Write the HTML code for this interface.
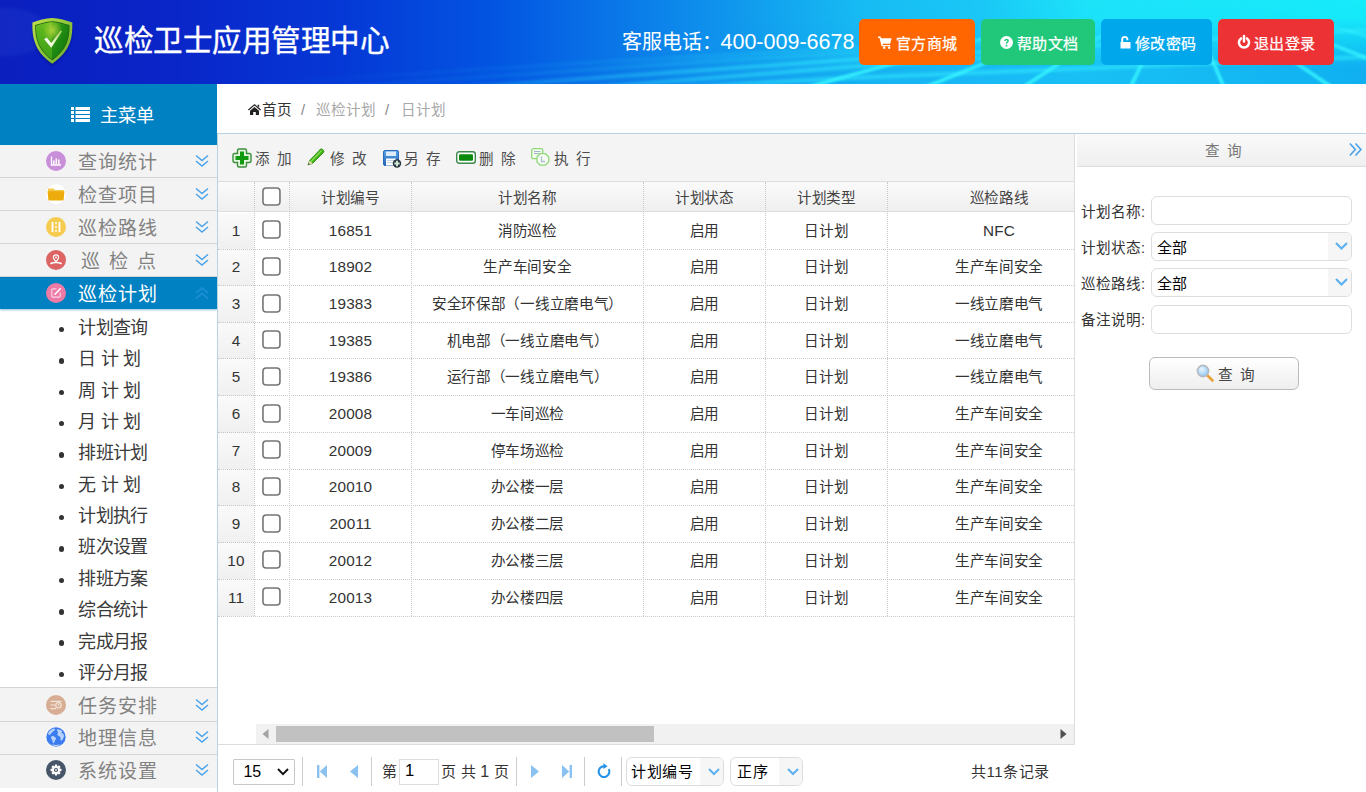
<!DOCTYPE html>
<html lang="zh-CN">
<head>
<meta charset="utf-8">
<title>巡检卫士应用管理中心</title>
<style>
*{box-sizing:border-box;margin:0;padding:0}
html,body{width:1366px;height:792px;overflow:hidden;background:#fff}
body{font-family:"Liberation Sans",sans-serif;color:#333;position:relative;font-size:14.6px;letter-spacing:-0.33px}
.abs{position:absolute}
svg{display:block;overflow:visible}
#hdr{position:absolute;left:0;top:0;width:1366px;height:84px;overflow:hidden;
 background:linear-gradient(90deg,#0b1fbe 0%,#0a25c8 12.4%,#0538d6 25%,#0356e2 36.6%,#0e8eec 51.2%,#16b2f2 63%,#19b9f5 71.7%,#18c0f5 79.8%,#10b0f0 100%)}
#title{position:absolute;left:94px;top:18px;height:46px;line-height:46px;font-size:29.6px;letter-spacing:-0.44px;color:#fff;white-space:nowrap;-webkit-text-stroke:0.35px #fff}
.tel{position:absolute;top:27px;height:30px;line-height:30px;color:#fff;white-space:nowrap;letter-spacing:0}
.hbtn{position:absolute;top:19px;height:46px;border-radius:5px;color:#fff;font-size:15px;letter-spacing:0.3px;line-height:46px;white-space:nowrap;-webkit-text-stroke:0.25px #fff}
.hbtn span{position:absolute;top:1.5px;height:46px;line-height:46px}
.hbtn svg{position:absolute}
/* sidebar */
#side{position:absolute;left:0;top:84px;width:217px;height:708px;background:#fff}
#sidehd{position:absolute;left:0;top:0;width:217px;height:61px;background:#0081c2;color:#fff}
#sidehd .mt{position:absolute;left:99.5px;top:16.5px;height:30px;line-height:30px;font-size:18.4px;letter-spacing:0.2px;white-space:nowrap}
.accbg{position:absolute;left:0;width:217px;background:#f3f3f3}
.accbg.sel{background:#0081c2;box-shadow:0 1px 2px rgba(0,110,170,.45)}
.accln{position:absolute;left:0;width:217px;height:1px;background:#d4d4d4}
#side .t{position:absolute;left:78.3px;height:32px;line-height:32px;font-size:19px;letter-spacing:0.9px;white-space:nowrap}
#side .ic{position:absolute;left:46px;width:20px;height:20px}
#side .chev{position:absolute;left:194.5px;width:14px;height:14px}
.sub{position:absolute;left:78.3px;height:30px;line-height:30px;font-size:18px;letter-spacing:-0.7px;word-spacing:1px;color:#3a3a3a;white-space:nowrap}
.dot{position:absolute;left:58.5px;width:5.5px;height:5.5px;border-radius:50%;background:#333}
/* main */
#crumb{position:absolute;left:218px;top:84px;width:1148px;height:49px;background:#fff;font-size:14.6px;color:#999}
#crumb span{position:absolute;top:10.6px;height:30px;line-height:30px;white-space:nowrap}
#vline{position:absolute;left:217px;top:133px;width:1px;height:659px;background:#b9d2e2}
#topline{position:absolute;left:218px;top:133px;width:1148px;height:1px;background:#b9d3e2}
#tb{position:absolute;left:218px;top:134px;width:856px;height:47px;background:#f4f4f4}
#tb .b{position:absolute;top:9.8px;margin-left:-0.7px;height:30px;line-height:30px;font-size:14.6px;word-spacing:3px;color:#4c4c4c;white-space:nowrap}
#tb svg{position:absolute}
#grid{position:absolute;left:218px;top:181px;width:856px;height:563px;background:#fff;overflow:hidden}
#ghead{position:absolute;left:0;top:0;width:856px;height:31px;border-top:1px solid #ddd;border-bottom:1px solid #ddd;background:linear-gradient(180deg,#fafafa 0%,#efefef 100%)}
.hc{position:absolute;top:2.9px;height:28px;line-height:28px;text-align:center;font-size:14.6px;color:#444;white-space:nowrap}
.vsep{position:absolute;width:0;border-left:1px dotted #c8c8c8}
.hsep{position:absolute;left:0;width:856px;height:0;border-top:1px dotted #c8c8c8;z-index:2}
.rn{position:absolute;left:0;width:36px;background:linear-gradient(180deg,#fafafa 0%,#f0f0f0 100%);text-align:center;font-size:14.6px;color:#333}
.c{position:absolute;text-align:center;font-size:14.6px;color:#333;white-space:nowrap}
.n{font-size:15.3px !important;letter-spacing:0.15px !important}
.cb{position:absolute;width:19px;height:19px}
#vr{position:absolute;left:1074px;top:134px;width:1px;height:611px;background:#ddd}
/* scrollbar */
#sb{position:absolute;left:256px;top:724px;width:818px;height:20px;background:#f1f1f1}
#sbthumb{position:absolute;left:20px;top:1.5px;width:378px;height:16px;background:#c1c1c1}
#pg{position:absolute;left:218px;top:744px;width:856px;height:48px;border-top:1px solid #ddd;background:#fff;font-size:15px;letter-spacing:0.2px;color:#333}
#pg .s{position:absolute;top:12px;width:1px;height:29px;background:#ccc}
#pg .tx{position:absolute;top:12px;height:30px;line-height:30px;white-space:nowrap}
.combo{position:absolute;border:1px solid #ddd;border-radius:6px;background:#fff;overflow:hidden;font-size:14.6px;color:#000}
.combo .ar{position:absolute;right:0;top:0;bottom:0;width:23px;background:#f6f6f6}
.combo .v{position:absolute;left:4.3px;top:0;white-space:nowrap}
.combo svg{position:absolute}
/* right panel */
#rp{position:absolute;left:1077px;top:134px;width:289px;height:658px;background:#fff}
#rphd{position:absolute;left:0;top:0;width:289px;height:33px;border-bottom:1px solid #ddd;background:linear-gradient(180deg,#fafafa 0%,#efefef 100%)}
#rphd .t{position:absolute;left:0;width:289px;top:2.2px;height:30px;line-height:30px;text-align:center;font-size:14.6px;word-spacing:3px;color:#777;white-space:nowrap}
.lbl{position:absolute;left:3.8px;height:30px;line-height:30px;font-size:14.6px;letter-spacing:0.05px;color:#333;white-space:nowrap}
.inp{position:absolute;left:74px;width:201px;height:29px;border:1px solid #ddd;border-radius:6px;background:#fff}
#qbtn{position:absolute;left:72px;top:223px;width:150px;height:33px;border:1px solid #bbb;border-radius:6px;background:linear-gradient(180deg,#fff 0%,#eee 100%);font-size:14.6px;color:#444}
</style>
</head>
<body>
<div id="hdr">
  <svg class="abs" style="left:0;top:0" width="1366" height="84" viewBox="0 0 1366 84">
    <defs>
      <linearGradient id="topc" x1="0" y1="0" x2="1" y2="0">
        <stop offset="0.52" stop-color="#1eebfa" stop-opacity="0"/>
        <stop offset="0.72" stop-color="#1eebfa" stop-opacity=".30"/>
        <stop offset="0.80" stop-color="#1eebfa" stop-opacity=".82"/>
        <stop offset="1" stop-color="#16ecfa" stop-opacity="1"/>
      </linearGradient>
      <linearGradient id="tv" x1="0" y1="0" x2="0" y2="1">
        <stop offset="0" stop-color="#fff" stop-opacity="1"/>
        <stop offset="0.22" stop-color="#fff" stop-opacity=".95"/>
        <stop offset="0.80" stop-color="#fff" stop-opacity="0"/>
      </linearGradient>
      <mask id="mt"><rect x="0" y="0" width="1366" height="84" fill="url(#tv)"/></mask>
      <linearGradient id="mk" x1="0" y1="0" x2="0" y2="1">
        <stop offset="0.18" stop-color="#fff" stop-opacity="0"/>
        <stop offset="0.55" stop-color="#fff" stop-opacity=".8"/>
        <stop offset="1" stop-color="#fff" stop-opacity="1"/>
      </linearGradient>
      <mask id="m1"><rect x="0" y="0" width="1366" height="84" fill="url(#mk)"/></mask>
      <linearGradient id="mh" x1="0" y1="0" x2="1" y2="0"><stop offset="0.15" stop-color="#fff" stop-opacity="0"/><stop offset="0.36" stop-color="#fff" stop-opacity=".35"/><stop offset="0.60" stop-color="#fff" stop-opacity="1"/></linearGradient>
      <mask id="m2"><rect x="0" y="0" width="1366" height="84" fill="url(#mh)"/></mask>
      <filter id="bl" x="-5%" y="-50%" width="110%" height="200%"><feGaussianBlur stdDeviation="0.9"/></filter>
      <filter id="bl2" x="-5%" y="-50%" width="110%" height="200%"><feGaussianBlur stdDeviation="1.6"/></filter>
    </defs>
    <rect x="0" y="0" width="1366" height="84" fill="url(#topc)" mask="url(#mt)"/>
    <ellipse cx="8" cy="32" rx="40" ry="24" fill="#5a7cf0" opacity=".10" filter="url(#bl2)"/>
    <g mask="url(#m2)"><g filter="url(#bl2)" stroke="#34eeff" stroke-width="4.200" fill="none" opacity=".55">
      <polyline points="150,106 511,84 860,59 1366,30"/>
      <polyline points="420,98 636,84 860,66 1000,57"/>
      <polyline points="600,93 737,84 848,78 1366,57"/>
      <polyline points="0,100 380,84 700,62 1100,38" opacity=".45"/>
      <polyline points="-100,100 250,84 600,62 1000,40" opacity=".35"/>
    </g></g>
    <g mask="url(#m1)"><g filter="url(#bl)" stroke="#38f6ff" stroke-width="3.6" opacity=".9">
      <line x1="1180" y1="-16" x2="782.9" y2="94" /><line x1="1180" y1="-16" x2="908.3" y2="94" /><line x1="1180" y1="-16" x2="1012.8" y2="94" /><line x1="1180" y1="-16" x2="1127.2" y2="94" /><line x1="1180" y1="-16" x2="1226.8" y2="94" /><line x1="1180" y1="-16" x2="1341.7" y2="94" /><line x1="1180" y1="-16" x2="1457.2" y2="94" /><line x1="1180" y1="-16" x2="1576.0" y2="94" />
    </g></g>
  </svg>
  <svg class="abs" style="left:32.1px;top:18.1px" width="41" height="46" viewBox="0 0 41 46">
    <defs>
      <linearGradient id="shb" x1="0" y1="0" x2="1" y2="1">
        <stop offset="0" stop-color="#c2e04a"/><stop offset=".5" stop-color="#8fc63a"/><stop offset="1" stop-color="#6aa82a"/>
      </linearGradient>
      <linearGradient id="shl" x1="0" y1="0" x2="0" y2="1">
        <stop offset="0" stop-color="#6cbc22"/><stop offset=".25" stop-color="#57b31c"/><stop offset="1" stop-color="#3fa016"/>
      </linearGradient>
      <linearGradient id="shr" x1="0" y1="0" x2="1" y2="1">
        <stop offset="0" stop-color="#4aa818"/><stop offset=".45" stop-color="#1f8a12"/><stop offset="1" stop-color="#0f6e0b"/>
      </linearGradient>
      <radialGradient id="shh" cx=".5" cy=".22" r=".3">
        <stop offset="0" stop-color="#b4d63c" stop-opacity=".9"/><stop offset="1" stop-color="#b4d63c" stop-opacity="0"/>
      </radialGradient>
      <linearGradient id="chk" x1="0" y1="0" x2="1" y2="0">
        <stop offset="0" stop-color="#ffffff"/><stop offset=".45" stop-color="#f2fadf"/><stop offset="1" stop-color="#a6cc55"/>
      </linearGradient>
      <filter id="shs" x="-20%" y="-20%" width="140%" height="140%"><feGaussianBlur stdDeviation="1.2"/></filter>
    </defs>
    <path d="M20.2 2 C13.500 2.200 6 4.600 0.400 6.400 C0.200 14 0.800 21 2.800 26.300 C5.500 34.500 11 41.500 20.200 47.700 C29.400 41.500 35 34.500 38 26.300 C40 21 40.500 14 40.300 6.400 C34.500 4.600 27 2.200 20.200 2Z" fill="#06106a" opacity=".45" filter="url(#shs)"/>
    <path d="M20.2 0 C13.500 0.200 6 2.600 0.400 4.400 C0.200 12 0.800 19 2.800 24.300 C5.500 32.500 11 39.500 20.200 45.700 C29.400 39.500 35 32.500 38 24.300 C40 19 40.500 12 40.300 4.400 C34.500 2.600 27 0.200 20.200 0Z" fill="url(#shb)"/>
    <path d="M20.2 3.200 C14 3.400 8 5.600 3.200 7.100 C3.100 13 3.700 19 5.400 23.600 C7.800 30.800 12.600 37 20.200 42.300 C27.800 37 32.800 30.800 35.400 23.600 C37.100 19 37.600 13 37.500 7.100 C32.500 5.600 26.500 3.400 20.200 3.200Z" fill="#1c6410"/>
    <path d="M20.2 4 C14.200 4.200 8.500 6.300 4 7.800 C3.900 13.300 4.500 19 6.100 23.400 C8.400 30.300 13 36.200 20.200 41.300Z" fill="url(#shl)"/>
    <path d="M20.2 4 C26.200 4.200 32 6.300 36.700 7.800 C36.800 13.300 36.300 19 34.700 23.400 C32.200 30.300 27.400 36.200 20.200 41.300Z" fill="url(#shr)"/>
    <path d="M20.2 4 C14.200 4.200 8.500 6.300 4 7.800 C3.900 13.300 4.500 19 6.100 23.400 C8.400 30.300 13 36.200 20.200 41.300 C27.400 36.200 32.200 30.300 34.700 23.400 C36.300 19 36.800 13.300 36.700 7.800 C32 6.300 26.200 4.200 20.200 4Z" fill="url(#shh)"/>
    <path d="M12.200 21.300 L14.700 19.500 L19.300 25 L28.700 12.400 L30.100 13.300 L19.300 29.800 Z" fill="url(#chk)"/>
  </svg>
  <div id="title">巡检卫士应用管理中心</div>
  <div class="tel" style="left:622px;font-size:20px">客服电话：</div>
  <div class="tel" style="left:720.5px;font-size:21.5px;top:26.5px">400-009-6678</div>
  <div class="hbtn" style="left:859px;width:116px;background:#ff6600">
    <svg style="left:19px;top:17px" width="14" height="13" viewBox="0 0 14 13"><path d="M0 0.600h2.600l0.500 1.600h10.600l-1.600 5.600h-7.600l0.300 1.200h7.400v1.300h-8.600l-2.100-8.400h-1.500z M5 11.700a1.200 1.200 0 1 0 2.400 0a1.200 1.200 0 1 0-2.400 0z M10 11.700a1.200 1.200 0 1 0 2.400 0a1.200 1.200 0 1 0-2.400 0z" fill="#fff"/></svg>
    <span style="left:37px">官方商城</span></div>
  <div class="hbtn" style="left:981px;width:114px;background:#22c87a">
    <svg style="left:19px;top:17px" width="13" height="13" viewBox="0 0 13 13"><circle cx="6.500" cy="6.500" r="6.500" fill="#fff"/><path d="M4.300 5.100c0-1.500 1-2.300 2.300-2.300s2.300 0.800 2.300 2c0 1.700-1.700 1.600-1.700 3.000h-1.500c0-1.900 1.600-2 1.600-2.900c0-0.400-0.300-0.700-0.800-0.700s-0.800 0.300-0.800 0.900z M5.700 8.800h1.600v1.600h-1.600z" fill="#22c87a"/></svg>
    <span style="left:36px">帮助文档</span></div>
  <div class="hbtn" style="left:1101px;width:111px;background:#00a7eb">
    <svg style="left:19.3px;top:16.800px" width="11" height="13" viewBox="0 0 11 13"><path d="M0.500 6h10v6.500h-10z" fill="#fff"/><path d="M2.200 6v-2.500a2.600 2.600 0 0 1 5.200 0v0.700" fill="none" stroke="#fff" stroke-width="1.900"/></svg>
    <span style="left:34px">修改密码</span></div>
  <div class="hbtn" style="left:1218px;width:116px;background:#ed3236">
    <svg style="left:19.3px;top:16.4px" width="14" height="14" viewBox="0 0 14 14"><path d="M4 3.400a5.100 5.100 0 1 0 6 0" fill="none" stroke="#fff" stroke-width="2.500" stroke-linecap="round"/><path d="M7 1v5.600" stroke="#fff" stroke-width="2.500" stroke-linecap="round"/></svg>
    <span style="left:36px">退出登录</span></div>
</div>
<div id="side">
<div id="sidehd"><svg class="abs" style="left:71px;top:23px" width="19" height="15" viewBox="0 0 19 15"><path d="M0 0h3v3h-3zM0 4h3v3h-3zM0 8h3v3h-3zM0 12h3v3h-3zM4.500 0h14.500v3h-14.500zM4.500 4h14.500v3h-14.500zM4.500 8h14.500v3h-14.500zM4.500 12h14.500v3h-14.500z" fill="#fff"/></svg><div class="mt">主菜单</div></div>
<div class="accbg" style="top:61px;height:132px"></div>
<div class="accbg sel" style="top:193px;height:31.8px"></div>
<div class="accbg" style="top:603px;height:101px"></div>
<div class="accln" style="top:93px"></div>
<div class="accln" style="top:126px"></div>
<div class="accln" style="top:159px"></div>
<div class="accln" style="top:192px"></div>
<div class="accln" style="top:603px"></div>
<div class="accln" style="top:637px"></div>
<div class="accln" style="top:670px"></div>
<svg class="ic" style="top:66.60px" viewBox="0 0 20 20"><circle cx="10" cy="10" r="10" fill="#c98fd8"/><path d="M5.500 5.500v8.500h9.500" fill="none" stroke="#fff" stroke-width="1.300"/><path d="M7.800 13v-3.500M10.300 13v-5.500M12.800 13v-4.500" stroke="#fff" stroke-width="1.500"/></svg><div class="t" style="top:62.70px;color:#828282;">查询统计</div><svg class="chev" style="top:69.60px" viewBox="0 0 14 14"><path d="M1 1.500l6 5l6-5M1 7l6 5l6-5" fill="none" stroke="#4aa3ea" stroke-width="1.500"/></svg>
<svg class="ic" style="top:99.80px" viewBox="0 0 20 20"><circle cx="10" cy="10" r="10" fill="#fff"/><path d="M2 4.500h5.500l1.500 1.500h8a1 1 0 0 1 1 1v1h-16z" fill="#f6c84a"/><path d="M1.500 7.200h17l-0.800 8.300a1 1 0 0 1-1 0.900h-13.400a1 1 0 0 1-1-0.900z" fill="#ecad0c"/></svg><div class="t" style="top:95.90px;color:#828282;">检查项目</div><svg class="chev" style="top:102.80px" viewBox="0 0 14 14"><path d="M1 1.500l6 5l6-5M1 7l6 5l6-5" fill="none" stroke="#4aa3ea" stroke-width="1.500"/></svg>
<svg class="ic" style="top:132.90px" viewBox="0 0 20 20"><circle cx="10" cy="10" r="10" fill="#f5cc50"/><path d="M6.500 5v10M13.500 5v10" stroke="#fff" stroke-width="1.800"/><path d="M10 5v10" stroke="#fff" stroke-width="1.400" stroke-dasharray="2.200 1.700"/></svg><div class="t" style="top:129.00px;color:#828282;">巡检路线</div><svg class="chev" style="top:135.90px" viewBox="0 0 14 14"><path d="M1 1.500l6 5l6-5M1 7l6 5l6-5" fill="none" stroke="#4aa3ea" stroke-width="1.500"/></svg>
<svg class="ic" style="top:166.30px" viewBox="0 0 20 20"><circle cx="10" cy="10" r="10" fill="#dd6464"/><path d="M10 11.800c-1.500-1.800-2.600-2.900-2.600-4.300a2.600 2.600 0 0 1 5.200 0c0 1.400-1.100 2.500-2.600 4.300z" fill="none" stroke="#fff" stroke-width="1.200"/><circle cx="10" cy="7.400" r="0.900" fill="#fff"/><path d="M5 13.500c1.500-1 3-1 5-1s3.500 0 5 1" fill="none" stroke="#fff" stroke-width="1.600" stroke-linecap="round"/></svg><div class="t" style="top:162.40px;color:#828282;letter-spacing:0;word-spacing:4px;left:80.5px;">巡 检 点</div><svg class="chev" style="top:169.30px" viewBox="0 0 14 14"><path d="M1 1.500l6 5l6-5M1 7l6 5l6-5" fill="none" stroke="#4aa3ea" stroke-width="1.500"/></svg>
<svg class="ic" style="top:198.80px" viewBox="0 0 20 20"><circle cx="10" cy="10" r="10" fill="#ee7aa6"/><path d="M10.500 5.800h-3.500a1.200 1.200 0 0 0-1.200 1.200v6a1.200 1.200 0 0 0 1.200 1.200h6a1.200 1.200 0 0 0 1.200-1.200v-3.500" fill="none" stroke="#fbd3e2" stroke-width="1.200"/><path d="M9 11.200l5.300-5.400" stroke="#fff" stroke-width="1.600" stroke-linecap="round"/></svg><div class="t" style="top:194.90px;color:#fff;">巡检计划</div><svg class="chev" style="top:201.80px" viewBox="0 0 14 14"><path d="M1 7l6-5l6 5M1 12.500l6-5l6 5" fill="none" stroke="#1b8dd6" stroke-width="1.900"/></svg>
<div class="dot" style="top:242.80px"></div><div class="sub" style="top:228.90px">计划查询</div>
<div class="dot" style="top:274.16px"></div><div class="sub" style="top:260.26px">日 计 划</div>
<div class="dot" style="top:305.52px"></div><div class="sub" style="top:291.62px">周 计 划</div>
<div class="dot" style="top:336.88px"></div><div class="sub" style="top:322.98px">月 计 划</div>
<div class="dot" style="top:368.24px"></div><div class="sub" style="top:354.34px">排班计划</div>
<div class="dot" style="top:399.60px"></div><div class="sub" style="top:385.70px">无 计 划</div>
<div class="dot" style="top:430.96px"></div><div class="sub" style="top:417.06px">计划执行</div>
<div class="dot" style="top:462.32px"></div><div class="sub" style="top:448.42px">班次设置</div>
<div class="dot" style="top:493.68px"></div><div class="sub" style="top:479.78px">排班方案</div>
<div class="dot" style="top:525.04px"></div><div class="sub" style="top:511.14px">综合统计</div>
<div class="dot" style="top:556.40px"></div><div class="sub" style="top:542.50px">完成月报</div>
<div class="dot" style="top:587.76px"></div><div class="sub" style="top:573.86px">评分月报</div>
<svg class="ic" style="top:610.80px" viewBox="0 0 20 20"><circle cx="10" cy="10" r="10" fill="#d7ae94"/><path d="M5 6.300h10M5 10h3.800M5 13.700h4.500" stroke="#f3e2d8" stroke-width="1.200" stroke-linecap="round"/><circle cx="12.400" cy="10.300" r="2.700" fill="none" stroke="#f3e2d8" stroke-width="1.200"/><path d="M12.400 8.900v1.500h1.200" fill="none" stroke="#f3e2d8" stroke-width=".9"/></svg><div class="t" style="top:606.90px;color:#828282;">任务安排</div><svg class="chev" style="top:613.80px" viewBox="0 0 14 14"><path d="M1 1.500l6 5l6-5M1 7l6 5l6-5" fill="none" stroke="#4aa3ea" stroke-width="1.500"/></svg>
<svg class="ic" style="top:643.10px" viewBox="0 0 20 20"><circle cx="10" cy="10" r="9.700" fill="#3b7df0"/><g fill="#b9d3fb"><path d="M2.200 6.200c1.200-2.300 3.300-3.900 5.600-4.600c0.900 0.300 1.500 0.900 0.900 1.700c-0.600 0.700-1.700 0.600-2 1.500c-0.200 0.800-1 0.900-1.600 1.500c-0.700 0.600-0.500 1.600-1.400 1.800c-0.900 0.100-1.300-0.900-1.500-1.900z"/><path d="M5.700 9.300c0.900-0.500 2.100-0.300 2.800 0.400c0.700 0.600 1.700 0.900 1.500 2c-0.200 1-1.100 1.500-1.400 2.500c-0.300 0.900-0.400 2-1.200 2c-0.700-0.100-0.800-1.200-0.900-2.100c-0.100-1-0.900-1.600-1.200-2.500c-0.300-0.900-0.300-1.900 0.400-2.300z"/><path d="M11.500 2.300c1.700 0 3.500 0.800 4.800 2c0.200 0.900-0.800 0.900-1.300 1.500c0.900 0.300 2 0.500 2.500 1.500c0.500 1.100 0.600 2.400 0 3.500c-0.500 0.900-0.900 1.900-1.700 2.600c-0.700 0.500-1.300-0.200-1.300-1.100c0-0.900 0.200-1.900-0.500-2.600c-0.700-0.700-2-0.700-2.500-1.700c-0.400-1 0.500-1.800 0.500-2.800c0-0.900-1.300-1.300-1.200-2.100c0.100-0.500 0.300-0.700 0.700-0.800z"/><path d="M5.500 17.200c2.800 0.900 6.200 0.900 9 0c-2.500 2.700-6.500 2.700-9 0z"/></g></svg><div class="t" style="top:639.20px;color:#828282;">地理信息</div><svg class="chev" style="top:646.10px" viewBox="0 0 14 14"><path d="M1 1.500l6 5l6-5M1 7l6 5l6-5" fill="none" stroke="#4aa3ea" stroke-width="1.500"/></svg>
<svg class="ic" style="top:676.30px" viewBox="0 0 20 20"><circle cx="10" cy="10" r="10" fill="#475569"/><g transform="translate(10 10)"><g fill="#fff"><rect x="-1.200" y="-5.400" width="2.400" height="10.800" rx=".4"/><rect x="-1.200" y="-5.400" width="2.400" height="10.800" rx=".4" transform="rotate(45)"/><rect x="-1.200" y="-5.400" width="2.400" height="10.800" rx=".4" transform="rotate(90)"/><rect x="-1.200" y="-5.400" width="2.400" height="10.800" rx=".4" transform="rotate(135)"/><circle r="3.900"/></g><circle r="2.100" fill="#475569"/><circle r="0.900" fill="#fff"/></g></svg><div class="t" style="top:672.40px;color:#828282;">系统设置</div><svg class="chev" style="top:679.30px" viewBox="0 0 14 14"><path d="M1 1.500l6 5l6-5M1 7l6 5l6-5" fill="none" stroke="#4aa3ea" stroke-width="1.500"/></svg>
</div>
<div id="crumb">
<svg class="abs" style="left:30px;top:20px" width="13" height="11" viewBox="0 0 13 11"><path d="M6.500 0l6.500 5.600l-0.800 0.900l-5.700-4.900l-5.700 4.900l-0.800-0.900z M9.600 0.800h1.600v2.600l-1.600-1.400z" fill="#222"/><path d="M6.500 2.900l4.500 3.900v4.200h-3.200v-3h-2.600v3h-3.200v-4.200z" fill="#222"/></svg>
<span style="left:43.8px;color:#333;letter-spacing:0.2px">首页</span>
<span style="left:83px;color:#888">/</span>
<span style="left:98px;color:#a8a8a8;letter-spacing:0px">巡检计划</span>
<span style="left:167px;color:#888">/</span>
<span style="left:182.6px;color:#a8a8a8;letter-spacing:0px">日计划</span>
</div>
<div id="topline"></div><div id="vline"></div>
<div id="tb">
<svg style="left:14px;top:14px" width="20" height="20" viewBox="0 0 20 20"><path d="M7 1h6a1.500 1.500 0 0 1 1.500 1.500v3h3a1.500 1.500 0 0 1 1.500 1.500v6a1.500 1.500 0 0 1-1.500 1.500h-3v3a1.500 1.500 0 0 1-1.500 1.500h-6a1.500 1.500 0 0 1-1.500-1.500v-3h-3a1.500 1.500 0 0 1-1.500-1.500v-6a1.500 1.500 0 0 1 1.500-1.500h3v-3a1.500 1.500 0 0 1 1.500-1.500z" fill="#e6f5e0" stroke="#3a8f3a" stroke-width="1.400"/><path d="M8 3.500h4v4.500h4.500v4h-4.500v4.500h-4v-4.500h-4.500v-4h4.500z" fill="#109a10"/></svg>
<div class="b" style="left:38px">添 加</div>
<svg style="left:89px;top:14px" width="19" height="18" viewBox="0 0 19 18"><path d="M1 17l1.600-4.600l10.800-11.200a1.300 1.300 0 0 1 1.800 0l1.400 1.400a1.300 1.300 0 0 1 0 1.800l-11 11z" fill="#3fb314" stroke="#2b8a10" stroke-width=".8"/><path d="M1 17l1.600-4.600l3 3z" fill="#e8d9a8"/><path d="M1 17l0.700-2l1.200 1.200z" fill="#444"/><path d="M4 13.500l10.500-10.800" stroke="#8fe060" stroke-width="1.200"/></svg>
<div class="b" style="left:113px">修 改</div>
<svg style="left:165px;top:16px" width="19" height="18" viewBox="0 0 19 18"><defs><linearGradient id="sv" x1="0" y1="0" x2="0" y2="1"><stop offset="0" stop-color="#5aa6ea"/><stop offset="1" stop-color="#1f63b8"/></linearGradient></defs><rect x="0.500" y="0.500" width="15" height="15" rx="1.500" fill="url(#sv)" stroke="#2a6ab8"/><rect x="3" y="1.500" width="10" height="4.500" fill="#dcecfb"/><rect x="3" y="8.500" width="10" height="7" fill="#fff"/><path d="M4 10.500h8M4 12.500h8" stroke="#b8c8d8" stroke-width=".8"/><circle cx="14" cy="13.500" r="4.200" fill="#2b3540"/><path d="M14 10.800v5.400M11.300 13.500h5.400" stroke="#cfe9d4" stroke-width="2"/></svg>
<div class="b" style="left:187px">另 存</div>
<svg style="left:238px;top:17px" width="20" height="13" viewBox="0 0 20 13"><rect x="0.700" y="0.700" width="18.600" height="11.600" rx="2.500" fill="#fff" stroke="#3c8a4a" stroke-width="1.400"/><rect x="3" y="3.200" width="14" height="6.600" rx="1.200" fill="#0b8a0b"/></svg>
<div class="b" style="left:262px">删 除</div>
<svg style="left:313px;top:14px" width="19" height="18" viewBox="0 0 19 18"><rect x="0.700" y="0.700" width="11" height="10" rx="1.500" fill="#f3fbef" stroke="#8fd878" stroke-width="1.300"/><path d="M3 3.500h6.500M3 5.500h5" stroke="#9db8c8" stroke-width="1"/><path d="M9 5.700h5.500l3.300 3.300v4.800l-3.300 3.300h-5.500l-3-3.300v-4.800z" fill="#f7fcf5" stroke="#8fd878" stroke-width="1.300"/><path d="M10.500 8.500v5h3.500" fill="none" stroke="#a8c0d0" stroke-width="1.300"/></svg>
<div class="b" style="left:337px">执 行</div>
</div>
<div id="grid">
<div id="ghead"></div>
<div class="hc" style="left:72px;width:121px">计划编号</div>
<div class="hc" style="left:194px;width:231px">计划名称</div>
<div class="hc" style="left:426px;width:121px">计划状态</div>
<div class="hc" style="left:548px;width:121px">计划类型</div>
<div class="hc" style="left:670px;width:222px">巡检路线</div>
<svg class="cb" style="left:43.8px;top:6.4px" viewBox="0 0 19 19"><rect x="0.950" y="0.950" width="17" height="17" rx="3.300" fill="#fff" stroke="#747474" stroke-width="1.600"/></svg>
<div class="rn n" style="top:31.80px;height:36.67px;line-height:36.67px">1</div>
<svg class="cb" style="left:43.8px;top:39.20px" viewBox="0 0 19 19"><rect x="0.950" y="0.950" width="17" height="17" rx="3.300" fill="#fff" stroke="#747474" stroke-width="1.600"/></svg>
<div class="c n" style="left:72px;width:121px;top:31.80px;height:36.67px;line-height:36.67px">16851</div>
<div class="c" style="left:194px;width:231px;top:31.80px;height:36.67px;line-height:36.67px">消防巡检</div>
<div class="c" style="left:426px;width:121px;top:31.80px;height:36.67px;line-height:36.67px">启用</div>
<div class="c" style="left:548px;width:121px;top:31.80px;height:36.67px;line-height:36.67px">日计划</div>
<div class="c n" style="left:670px;width:222px;top:31.80px;height:36.67px;line-height:36.67px">NFC</div>
<div class="hsep" style="top:68px"></div>
<div class="rn n" style="top:68.47px;height:36.67px;line-height:36.67px">2</div>
<svg class="cb" style="left:43.8px;top:75.87px" viewBox="0 0 19 19"><rect x="0.950" y="0.950" width="17" height="17" rx="3.300" fill="#fff" stroke="#747474" stroke-width="1.600"/></svg>
<div class="c n" style="left:72px;width:121px;top:68.47px;height:36.67px;line-height:36.67px">18902</div>
<div class="c" style="left:194px;width:231px;top:68.47px;height:36.67px;line-height:36.67px">生产车间安全</div>
<div class="c" style="left:426px;width:121px;top:68.47px;height:36.67px;line-height:36.67px">启用</div>
<div class="c" style="left:548px;width:121px;top:68.47px;height:36.67px;line-height:36.67px">日计划</div>
<div class="c" style="left:670px;width:222px;top:68.47px;height:36.67px;line-height:36.67px">生产车间安全</div>
<div class="hsep" style="top:104px"></div>
<div class="rn n" style="top:105.14px;height:36.67px;line-height:36.67px">3</div>
<svg class="cb" style="left:43.8px;top:112.54px" viewBox="0 0 19 19"><rect x="0.950" y="0.950" width="17" height="17" rx="3.300" fill="#fff" stroke="#747474" stroke-width="1.600"/></svg>
<div class="c n" style="left:72px;width:121px;top:105.14px;height:36.67px;line-height:36.67px">19383</div>
<div class="c" style="left:194px;width:231px;top:105.14px;height:36.67px;line-height:36.67px">安全环保部（一线立磨电气）</div>
<div class="c" style="left:426px;width:121px;top:105.14px;height:36.67px;line-height:36.67px">启用</div>
<div class="c" style="left:548px;width:121px;top:105.14px;height:36.67px;line-height:36.67px">日计划</div>
<div class="c" style="left:670px;width:222px;top:105.14px;height:36.67px;line-height:36.67px">一线立磨电气</div>
<div class="hsep" style="top:141px"></div>
<div class="rn n" style="top:141.81px;height:36.67px;line-height:36.67px">4</div>
<svg class="cb" style="left:43.8px;top:149.21px" viewBox="0 0 19 19"><rect x="0.950" y="0.950" width="17" height="17" rx="3.300" fill="#fff" stroke="#747474" stroke-width="1.600"/></svg>
<div class="c n" style="left:72px;width:121px;top:141.81px;height:36.67px;line-height:36.67px">19385</div>
<div class="c" style="left:194px;width:231px;top:141.81px;height:36.67px;line-height:36.67px">机电部（一线立磨电气）</div>
<div class="c" style="left:426px;width:121px;top:141.81px;height:36.67px;line-height:36.67px">启用</div>
<div class="c" style="left:548px;width:121px;top:141.81px;height:36.67px;line-height:36.67px">日计划</div>
<div class="c" style="left:670px;width:222px;top:141.81px;height:36.67px;line-height:36.67px">一线立磨电气</div>
<div class="hsep" style="top:177px"></div>
<div class="rn n" style="top:178.48px;height:36.67px;line-height:36.67px">5</div>
<svg class="cb" style="left:43.8px;top:185.88px" viewBox="0 0 19 19"><rect x="0.950" y="0.950" width="17" height="17" rx="3.300" fill="#fff" stroke="#747474" stroke-width="1.600"/></svg>
<div class="c n" style="left:72px;width:121px;top:178.48px;height:36.67px;line-height:36.67px">19386</div>
<div class="c" style="left:194px;width:231px;top:178.48px;height:36.67px;line-height:36.67px">运行部（一线立磨电气）</div>
<div class="c" style="left:426px;width:121px;top:178.48px;height:36.67px;line-height:36.67px">启用</div>
<div class="c" style="left:548px;width:121px;top:178.48px;height:36.67px;line-height:36.67px">日计划</div>
<div class="c" style="left:670px;width:222px;top:178.48px;height:36.67px;line-height:36.67px">一线立磨电气</div>
<div class="hsep" style="top:214px"></div>
<div class="rn n" style="top:215.15px;height:36.67px;line-height:36.67px">6</div>
<svg class="cb" style="left:43.8px;top:222.55px" viewBox="0 0 19 19"><rect x="0.950" y="0.950" width="17" height="17" rx="3.300" fill="#fff" stroke="#747474" stroke-width="1.600"/></svg>
<div class="c n" style="left:72px;width:121px;top:215.15px;height:36.67px;line-height:36.67px">20008</div>
<div class="c" style="left:194px;width:231px;top:215.15px;height:36.67px;line-height:36.67px">一车间巡检</div>
<div class="c" style="left:426px;width:121px;top:215.15px;height:36.67px;line-height:36.67px">启用</div>
<div class="c" style="left:548px;width:121px;top:215.15px;height:36.67px;line-height:36.67px">日计划</div>
<div class="c" style="left:670px;width:222px;top:215.15px;height:36.67px;line-height:36.67px">生产车间安全</div>
<div class="hsep" style="top:251px"></div>
<div class="rn n" style="top:251.82px;height:36.67px;line-height:36.67px">7</div>
<svg class="cb" style="left:43.8px;top:259.22px" viewBox="0 0 19 19"><rect x="0.950" y="0.950" width="17" height="17" rx="3.300" fill="#fff" stroke="#747474" stroke-width="1.600"/></svg>
<div class="c n" style="left:72px;width:121px;top:251.82px;height:36.67px;line-height:36.67px">20009</div>
<div class="c" style="left:194px;width:231px;top:251.82px;height:36.67px;line-height:36.67px">停车场巡检</div>
<div class="c" style="left:426px;width:121px;top:251.82px;height:36.67px;line-height:36.67px">启用</div>
<div class="c" style="left:548px;width:121px;top:251.82px;height:36.67px;line-height:36.67px">日计划</div>
<div class="c" style="left:670px;width:222px;top:251.82px;height:36.67px;line-height:36.67px">生产车间安全</div>
<div class="hsep" style="top:288px"></div>
<div class="rn n" style="top:288.49px;height:36.67px;line-height:36.67px">8</div>
<svg class="cb" style="left:43.8px;top:295.89px" viewBox="0 0 19 19"><rect x="0.950" y="0.950" width="17" height="17" rx="3.300" fill="#fff" stroke="#747474" stroke-width="1.600"/></svg>
<div class="c n" style="left:72px;width:121px;top:288.49px;height:36.67px;line-height:36.67px">20010</div>
<div class="c" style="left:194px;width:231px;top:288.49px;height:36.67px;line-height:36.67px">办公楼一层</div>
<div class="c" style="left:426px;width:121px;top:288.49px;height:36.67px;line-height:36.67px">启用</div>
<div class="c" style="left:548px;width:121px;top:288.49px;height:36.67px;line-height:36.67px">日计划</div>
<div class="c" style="left:670px;width:222px;top:288.49px;height:36.67px;line-height:36.67px">生产车间安全</div>
<div class="hsep" style="top:324px"></div>
<div class="rn n" style="top:325.16px;height:36.67px;line-height:36.67px">9</div>
<svg class="cb" style="left:43.8px;top:332.56px" viewBox="0 0 19 19"><rect x="0.950" y="0.950" width="17" height="17" rx="3.300" fill="#fff" stroke="#747474" stroke-width="1.600"/></svg>
<div class="c n" style="left:72px;width:121px;top:325.16px;height:36.67px;line-height:36.67px">20011</div>
<div class="c" style="left:194px;width:231px;top:325.16px;height:36.67px;line-height:36.67px">办公楼二层</div>
<div class="c" style="left:426px;width:121px;top:325.16px;height:36.67px;line-height:36.67px">启用</div>
<div class="c" style="left:548px;width:121px;top:325.16px;height:36.67px;line-height:36.67px">日计划</div>
<div class="c" style="left:670px;width:222px;top:325.16px;height:36.67px;line-height:36.67px">生产车间安全</div>
<div class="hsep" style="top:361px"></div>
<div class="rn n" style="top:361.83px;height:36.67px;line-height:36.67px">10</div>
<svg class="cb" style="left:43.8px;top:369.23px" viewBox="0 0 19 19"><rect x="0.950" y="0.950" width="17" height="17" rx="3.300" fill="#fff" stroke="#747474" stroke-width="1.600"/></svg>
<div class="c n" style="left:72px;width:121px;top:361.83px;height:36.67px;line-height:36.67px">20012</div>
<div class="c" style="left:194px;width:231px;top:361.83px;height:36.67px;line-height:36.67px">办公楼三层</div>
<div class="c" style="left:426px;width:121px;top:361.83px;height:36.67px;line-height:36.67px">启用</div>
<div class="c" style="left:548px;width:121px;top:361.83px;height:36.67px;line-height:36.67px">日计划</div>
<div class="c" style="left:670px;width:222px;top:361.83px;height:36.67px;line-height:36.67px">生产车间安全</div>
<div class="hsep" style="top:398px"></div>
<div class="rn n" style="top:398.50px;height:36.67px;line-height:36.67px">11</div>
<svg class="cb" style="left:43.8px;top:405.90px" viewBox="0 0 19 19"><rect x="0.950" y="0.950" width="17" height="17" rx="3.300" fill="#fff" stroke="#747474" stroke-width="1.600"/></svg>
<div class="c n" style="left:72px;width:121px;top:398.50px;height:36.67px;line-height:36.67px">20013</div>
<div class="c" style="left:194px;width:231px;top:398.50px;height:36.67px;line-height:36.67px">办公楼四层</div>
<div class="c" style="left:426px;width:121px;top:398.50px;height:36.67px;line-height:36.67px">启用</div>
<div class="c" style="left:548px;width:121px;top:398.50px;height:36.67px;line-height:36.67px">日计划</div>
<div class="c" style="left:670px;width:222px;top:398.50px;height:36.67px;line-height:36.67px">生产车间安全</div>
<div class="hsep" style="top:435px"></div>
<div class="vsep" style="left:36px;top:1px;height:434.00px"></div>
<div class="vsep" style="left:71px;top:1px;height:434.00px"></div>
<div class="vsep" style="left:193px;top:1px;height:434.00px"></div>
<div class="vsep" style="left:425px;top:1px;height:434.00px"></div>
<div class="vsep" style="left:547px;top:1px;height:434.00px"></div>
<div class="vsep" style="left:669px;top:1px;height:434.00px"></div>
</div>
<div id="vr"></div>
<div id="sb"><div id="sbthumb"></div><svg class="abs" style="left:6px;top:5px" width="7" height="10" viewBox="0 0 7 10"><path d="M6.500 0v10l-6-5z" fill="#a3a3a3"/></svg><svg class="abs" style="left:804px;top:5px" width="7" height="10" viewBox="0 0 7 10"><path d="M0.500 0v10l6-5z" fill="#505050"/></svg></div>
<div id="pg">
<div class="abs" style="left:15px;top:14px;width:62px;height:25.5px;border:1px solid #c8c8c8;background:#fff;border-radius:1px"><div class="abs" style="left:9.5px;top:0;height:24px;line-height:24px;font-size:16px;letter-spacing:-0.2px;color:#000">15</div><svg class="abs" style="left:43px;top:8px" width="12" height="8" viewBox="0 0 12 8"><path d="M1 1l5 5.200l5-5.200" fill="none" stroke="#111" stroke-width="1.900"/></svg></div>
<div class="s" style="left:84px"></div>
<svg class="abs" style="left:99px;top:20px;opacity:.55" width="10" height="13" viewBox="0 0 10 13"><path d="M0 0h2.400v13h-2.400zM10 0v13l-7.200-6.500z" fill="#2a8ee6"/></svg>
<svg class="abs" style="left:132px;top:20px;opacity:.55" width="8" height="13" viewBox="0 0 8 13"><path d="M8 0v13l-8-6.500z" fill="#2a8ee6"/></svg>
<div class="s" style="left:153px"></div>
<div class="tx" style="left:163.5px">第</div>
<div class="abs" style="left:181px;top:14px;width:40px;height:26px;border:1px solid #ddd;background:#fff"><div class="abs" style="left:5px;top:-1px;height:24px;line-height:24px;font-size:16.600px;color:#000">1</div></div>
<div class="tx" style="left:223px;word-spacing:0px">页 共 <span style="font-size:16px">1</span> 页</div>
<div class="s" style="left:298px"></div>
<svg class="abs" style="left:313px;top:20px;opacity:.55" width="8" height="13" viewBox="0 0 8 13"><path d="M0 0v13l8-6.500z" fill="#2a8ee6"/></svg>
<svg class="abs" style="left:344px;top:20px;opacity:.55" width="10" height="13" viewBox="0 0 10 13"><path d="M7.600 0h2.400v13h-2.400zM0 0v13l7.200-6.500z" fill="#2a8ee6"/></svg>
<div class="s" style="left:366px"></div>
<svg class="abs" style="left:378.7px;top:18.3px" width="14" height="16" viewBox="0 0 14 16"><path d="M11.700 5.900A5.400 5.400 0 1 1 7 3.200" fill="none" stroke="#2492e6" stroke-width="2.050"/><path d="M6.400 0.300v5.800l4.200-2.900z" fill="#2492e6"/></svg>
<div class="s" style="left:403px"></div>
<div class="combo" style="left:408px;top:12px;width:98px;height:29px"><div class="ar"></div><div class="v" style="height:27px;line-height:27.5px;font-size:15px;letter-spacing:0.5px">计划编号</div><svg style="left:81px;top:10px" width="12" height="8" viewBox="0 0 12 8"><path d="M1 1l5 5l5-5" fill="none" stroke="#5cb1ee" stroke-width="2.100"/></svg></div>
<div class="combo" style="left:512px;top:12px;width:73px;height:29px"><div class="ar"></div><div class="v" style="left:6px;height:27px;line-height:27.5px;font-size:15px;letter-spacing:0.5px">正序</div><svg style="left:56px;top:10px" width="12" height="8" viewBox="0 0 12 8"><path d="M1 1l5 5l5-5" fill="none" stroke="#5cb1ee" stroke-width="2.100"/></svg></div>
<div class="tx" style="left:753px;letter-spacing:0.55px">共11条记录</div>
</div>
<div id="rp">
<div id="rphd"><div class="t" style="left:2px">查 询</div><svg class="abs" style="left:271.5px;top:9.3px" width="13" height="13" viewBox="0 0 12 12"><path d="M0.800 0.500l5 5.500l-5 5.500M6 0.500l5 5.500l-5 5.500" fill="none" stroke="#4aa3ea" stroke-width="1.500"/></svg></div>
<div class="lbl" style="top:62.60px">计划名称:</div>
<div class="inp" style="top:62.00px"></div>
<div class="lbl" style="top:98.80px">计划状态:</div>
<div class="combo" style="left:74px;top:98.20px;width:201px;height:29px"><div class="ar"></div><div class="v" style="left:4.6px;height:27px;line-height:30.6px;font-size:15px;letter-spacing:0.4px">全部</div><svg style="left:183px;top:9px" width="13" height="9" viewBox="0 0 13 9"><path d="M1 1l5.500 5.500l5.500-5.500" fill="none" stroke="#5cb1ee" stroke-width="2.200"/></svg></div>
<div class="lbl" style="top:135.00px">巡检路线:</div>
<div class="combo" style="left:74px;top:134.40px;width:201px;height:29px"><div class="ar"></div><div class="v" style="left:4.6px;height:27px;line-height:30.6px;font-size:15px;letter-spacing:0.4px">全部</div><svg style="left:183px;top:9px" width="13" height="9" viewBox="0 0 13 9"><path d="M1 1l5.500 5.500l5.500-5.500" fill="none" stroke="#5cb1ee" stroke-width="2.200"/></svg></div>
<div class="lbl" style="top:171.20px">备注说明:</div>
<div class="inp" style="top:170.60px"></div>
<div id="qbtn"><svg class="abs" style="left:46px;top:6px" width="18" height="18" viewBox="0 0 18 18"><defs><radialGradient id="mg" cx=".4" cy=".35" r=".7"><stop offset="0" stop-color="#eaf5ff"/><stop offset="1" stop-color="#8cc4f2"/></radialGradient></defs><path d="M10.500 10.500l6 6" stroke="#e8a13a" stroke-width="2.600" stroke-linecap="round"/><circle cx="7" cy="7" r="5.600" fill="url(#mg)" stroke="#b4b9bf" stroke-width="1.600"/></svg><div class="abs" style="left:68.3px;top:1.5px;height:31px;line-height:31px;word-spacing:3px">查 询</div></div>
</div>
</body>
</html>
